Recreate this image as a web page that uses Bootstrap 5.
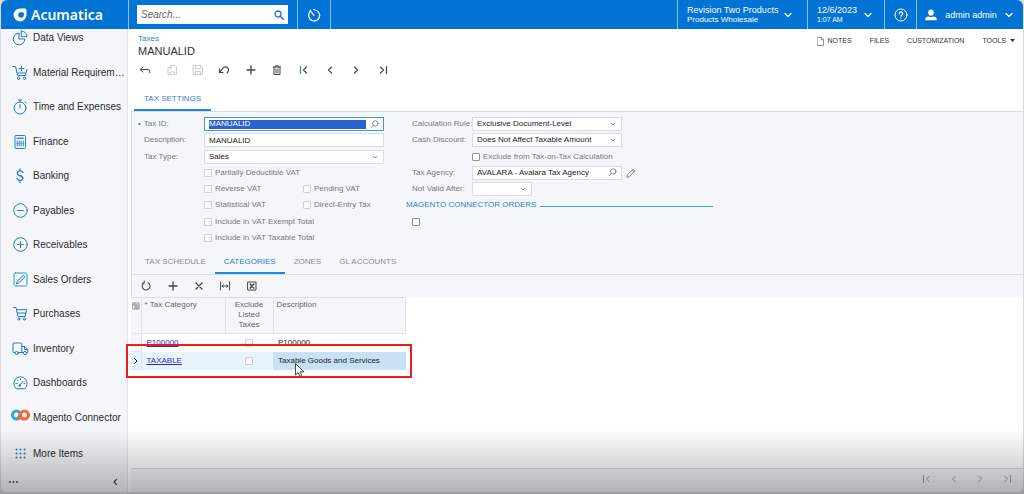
<!DOCTYPE html>
<html lang="en">
<head>
<meta charset="utf-8">
<meta name="viewport" content="width=device-width, initial-scale=1">
<title>Taxes - MANUALID</title>
<link href="https://cdn.jsdelivr.net/npm/bootstrap@5.3.0/dist/css/bootstrap.min.css" rel="stylesheet">
<style>
:root{--brand:#0073d5;--link:#2a84c9;--panel:#f4f6f9;--line:#dadde1}
body{font-family:"Liberation Sans",Arial,sans-serif;font-size:8px;line-height:10px;color:#333;background:#d9dbde}
a{text-decoration:none}
svg{fill:none;stroke:currentColor;stroke-linecap:round;stroke-linejoin:round;flex:none}
.app-window{border-radius:6px;overflow:hidden;margin:0 1px 3px;min-height:calc(100vh - 3px);background:#fff}
.topbar{background:var(--brand);height:29px;color:#fff}
.topbar .cell{border-left:1px solid #8dc0ee;color:#fff}
.topbar button.cell{border-width:0 0 0 1px}
.topbar .tenant{width:130px;padding:0 15px 0 9px}
.topbar .clock{width:77px;padding:0 12px 0 9px}
.topbar .help{width:32px}
.topbar .user{width:107px;padding:0 10px 0 8px}
.side{width:127px;flex:none}
.brand-name{font:600 14px/20px "Noto Sans","Open Sans",sans-serif;color:#fff}
.search-box{width:151px;height:19px;background:#fff;margin:0 9px 0 8px}
.search-box input{font-size:10px;font-style:italic;color:#444;border:0;padding:0 4px;min-width:0;outline:0;background:none}
.search-box input::placeholder{color:#666;opacity:1}
.bare{border:0;background:none;padding:0;color:inherit;line-height:10px}
.t9{font-size:9px}.t7{font-size:7px}
.sidebar{background:var(--panel);border-right:1px solid #e2e5e8}
.side-nav{margin-top:-8px;min-height:451px}
.side-nav a{color:#2c2c2c;font-size:10px;line-height:12px;padding-left:11px;flex:1 1 34px;gap:5px;white-space:nowrap}
.side-nav a:last-child{flex:0 0 37px}
.side-nav svg{color:#2a7cc4}
.side-wrap{clip-path:inset(0)}
.side-foot{height:20px;padding:0 9px 0 7px;color:#444}
.content-area{margin-left:3px;min-width:0}
.page-head{padding:5px 0 0 7px}
.group-link{color:var(--link)}
.page-title{font-size:11px;line-height:14px;color:#333;font-weight:400}
.page-links a,.page-links button{color:#333;font-size:7px}
.page-links{gap:18px;padding:7px 8px 0 0}
.tools{height:24px;color:#444;margin-left:1px}
.tools button{flex:1}
.tools-10{width:264px}.tools-5{width:132px}.tools-4{width:106px}
.tab-row button{font-size:8px;color:#8a8e93;padding:0 9px;border:0;border-bottom:2px solid transparent;border-radius:0;background:none;line-height:20px}
.tab-row button.active{color:var(--link);border-bottom-color:#1a8be0}
.main-tabs{margin:7px 0 0 3px}
.main-tabs button{padding:0 10px}
.sub-tabs{margin:6px 0 0 4px}
.panel-area{background:var(--panel);border-top:1px solid var(--line);border-left:1px solid var(--line)}
.fgrid{display:grid;grid-auto-rows:1fr;min-height:130px;align-items:center;color:#767b81}
.fleft{grid-template-columns:60px 99px 81px;margin-left:12px}
.fright{grid-template-columns:60px 150px 91px;margin-left:28px}
.field{background:#fff;border:1px solid var(--line);height:14px;min-width:0}
.field input,.field select,select.field{font-size:8px;line-height:10px;color:#222;border:0;padding:0 4px;background:none;min-width:0;outline:0;height:12px}
select.field,input.field{border:1px solid var(--line);height:14px;background-color:#fff;color:#222;padding:0 4px;font-size:8px;border-radius:0;line-height:10px;outline:0}
select.field{appearance:none;background-image:url("data:image/svg+xml,%3Csvg xmlns='http://www.w3.org/2000/svg' viewBox='0 0 6 4'%3E%3Cpath d='M1 1l2 2 2-2' fill='none' stroke='%23777' stroke-width='.8'/%3E%3C/svg%3E");background-repeat:no-repeat;background-position:right 5px center;background-size:6px 4px}
.field.current{border-color:#3d97d8}
.field.current input{background:#2a62d0;color:#fff;height:9px;margin-left:4px;padding:0}
.date-field{width:60px}
.tick{appearance:none;width:8px;height:8px;border:1px solid #cdd0d4;border-radius:1px;background:#fafafa;margin:0;flex:none}
.tick.on-edit{border-color:#8f9499;background:#fff}
.tick-row{gap:3px;white-space:nowrap}
.span2{grid-column:span 2}.span3{grid-column:1/-1}
.req{margin-left:-6px}
.req::before{content:"•";margin-right:3px}
.group-title{color:var(--link);gap:4px;margin-left:-6px;font-size:8px;line-height:10px;font-weight:400}
.group-title::after{content:"";flex:1;height:1px;background:#4aa0e0;margin-top:3px}
.list-tools{border-top:1px solid var(--line);background:var(--panel)}
.list-tools .tools{height:22px}
.grid-wrap{width:275px}
.grid-table{table-layout:fixed;width:100%;border-collapse:collapse}
.grid-table th{background:var(--panel);font-weight:400;color:#666;vertical-align:top;padding:2px 3px;height:36px;border-right:1px solid #e2e5e8;border-bottom:1px solid #e2e5e8;border-top:1px solid var(--line)}
.grid-table td{height:18px;padding:0 5px;color:#222;vertical-align:middle}
.grid-table td a{color:#2a2ad4;text-decoration:underline}
.grid-table .sel{background:var(--panel);padding:0;text-align:center;border:1px solid #e2e5e8;border-left:0}
.grid-table tr.picked td{background:#e8f3fc}
.grid-table tr.picked td.focus-cell{background:#c9e1f6}
.grid-table .tick{display:block;margin:0 auto}
.callout{position:absolute;left:-5px;top:47px;width:286px;height:34px;border:2px solid #ee1c1c;pointer-events:none}
.pointer{position:absolute;left:163px;top:66px}
.pager{background:var(--panel);border-top:1px solid var(--line);height:24px}
.pager .tools{color:#9fa3a7;margin-right:3px;height:20px}
.shade{position:fixed;left:0;right:0;bottom:0;height:64px;background:linear-gradient(rgba(0,0,0,0),rgba(0,0,0,.28));pointer-events:none}
</style>
</head>
<body>
<div class="app-window d-flex flex-column">
  <header class="topbar d-flex align-items-stretch">
    <a href="#" class="side d-flex align-items-center ps-2">
      <svg class="ms-1 me-1" width="14" height="14" viewBox="0 0 14 14"><path fill-rule="evenodd" d="M7 .5h5q1.500 0 1.500 1.500V7A6.500 6.500 0 1 1 7 .5zM8 4.200A2.800 2.800 0 1 0 10.800 7V5.200q0-1-1-1z" fill="#fff" stroke="none"/></svg>
      <span class="brand-name">Acumatica</span>
    </a>
    <div class="cell d-flex align-items-center">
      <form class="search-box d-flex align-items-center">
        <input type="text" class="flex-grow-1" placeholder="Search..." aria-label="Search">
        <button type="button" class="bare me-1" aria-label="Run search"><svg class="d-block" width="10" height="10" viewBox="0 0 10 10" style="color:#1b74c5"><circle cx="4" cy="4" r="3" stroke-width="1.300"/><path d="M6.300 6.300L9.200 9.200" stroke-width="1.500"/></svg></button>
      </form>
    </div>
    <div class="cell d-flex"><button class="bare px-2 mx-0" aria-label="Recent"><svg class="d-block" width="16" height="16" viewBox="0 0 16 16"><path d="M9 3A5.500 5.500 0 1 1 3.500 5.500M4.500 4L8 8.500M3.500 5.500L4.500 3M9 3L7.500 2.500" stroke-width="1.200"/></svg></button></div>
    <div class="cell flex-grow-1"></div>
    <button class="bare cell d-flex align-items-center justify-content-between text-start tenant">
      <span><span class="t9 d-block">Revision Two Products</span><span class="d-block">Products Wholesale</span></span>
      <svg width="8" height="6" viewBox="0 0 8 6"><path d="M1 1.500l3 3 3-3" stroke-width="1.300"/></svg>
    </button>
    <button class="bare cell d-flex align-items-center justify-content-between text-start clock">
      <span><span class="t9 d-block">12/6/2023</span><span class="d-block t7">1:07 AM</span></span>
      <svg width="8" height="6" viewBox="0 0 8 6"><path d="M1 1.500l3 3 3-3" stroke-width="1.300"/></svg>
    </button>
    <button class="bare cell d-flex align-items-center justify-content-center help" aria-label="Help">
      <svg width="14" height="14" viewBox="0 0 14 14"><circle cx="7" cy="7" r="6"/><path d="M5.300 5.600a1.700 1.700 0 1 1 2.400 1.500q-.7.400-.7 1.100M7 10v.1" stroke-width="1.200"/></svg>
    </button>
    <button class="bare cell d-flex align-items-center justify-content-between user">
      <svg width="12" height="12" viewBox="0 0 12 12" style="fill:#fff;stroke:none"><ellipse cx="6" cy="3.600" rx="2.800" ry="3.200"/><path d="M.3 11.200V10Q.5 7.800 3.800 7.400q2.200 1 4.400 0 3.300.4 3.500 2.600v1.200z"/></svg>
      <span class="t9">admin admin</span>
      <svg width="8" height="6" viewBox="0 0 8 6"><path d="M1 1.500l3 3 3-3" stroke-width="1.300"/></svg>
    </button>
  </header>

  <div class="d-flex flex-grow-1 side-wrap">
    <aside class="side sidebar d-flex flex-column">
      <nav class="side-nav d-flex flex-column flex-grow-1">
        <a href="#" class="d-flex align-items-center"><svg width="16" height="16" viewBox="0 0 16 16"><path d="M7 3.200A5.800 5.800 0 1 0 12.800 9H7zM9.300 1v5.700H15A5.700 5.700 0 0 0 9.300 1z"/></svg>Data Views</a>
        <a href="#" class="d-flex align-items-center"><svg width="16" height="16" viewBox="0 0 16 16"><path d="M1 1.500h2.500l2.300 9h7.500L15 4.500M5 8h8.500M9.500 1v5M7 3.500h5"/><circle cx="6.500" cy="13.300" r="1.200"/><circle cx="12.500" cy="13.300" r="1.200"/></svg>Material Requirem…</a>
        <a href="#" class="d-flex align-items-center"><svg width="16" height="16" viewBox="0 0 16 16"><circle cx="8" cy="9" r="6"/><path d="M8 9V5.500M6.500 1h3M8 1v2M13 3l1 1"/></svg>Time and Expenses</a>
        <a href="#" class="d-flex align-items-center"><svg width="16" height="16" viewBox="0 0 16 16"><rect x="3" y="1.500" width="10.500" height="13" rx="1"/><path d="M5 4.500h6.500M5.200 7v5M7.200 7v5M9.200 7v5M11.300 7v5" stroke-width=".9"/><path d="M5 3.500h6.500M4.800 9.500h7" stroke-width=".4"/></svg>Finance</a>
        <a href="#" class="d-flex align-items-center"><svg width="16" height="16" viewBox="0 0 16 16"><path d="M11 4.500Q10.300 2.800 8.200 2.800C4.500 2.800 4.400 6.700 7.500 7.500c4.500 1 4.300 5 .5 5q-2.400 0-3-2M8 1v1.800M8 12.500v2" stroke-width="1.300"/></svg>Banking</a>
        <a href="#" class="d-flex align-items-center"><svg width="16" height="16" viewBox="0 0 16 16"><circle cx="8.500" cy="7.500" r="6.800"/><path d="M5.500 7.500h6"/></svg>Payables</a>
        <a href="#" class="d-flex align-items-center"><svg width="16" height="16" viewBox="0 0 16 16"><circle cx="8.500" cy="7.500" r="6.800"/><path d="M5.700 7.500h5.600M8.500 4.700v5.600" stroke-width="1.200"/></svg>Receivables</a>
        <a href="#" class="d-flex align-items-center"><svg width="16" height="16" viewBox="0 0 16 16"><rect x="2" y="1" width="13" height="13" rx="1.500" stroke="#209ae0"/><path d="M4.500 11.500l.8-2.300 6.200-6 1.500 1.500-6.200 6z"/></svg>Sales Orders</a>
        <a href="#" class="d-flex align-items-center"><svg width="16" height="16" viewBox="0 0 16 16"><path d="M1.500 1.500H4l2 9h7.300l1.200-6.800H4.600M5.200 7h8.600"/><circle cx="6.800" cy="13" r="1.100"/><circle cx="12.300" cy="13" r="1.100"/></svg>Purchases</a>
        <a href="#" class="d-flex align-items-center"><svg width="17" height="16" viewBox="0 0 17 16" style="margin-right:-1px"><path d="M3 11.500H1.500q-.5 0-.5-.5V2.800q0-.8.8-.8H9q.8 0 .8.8v8.700H6.500M9.800 5.500h3l3 3.200v2.800H15M11.500 11.500H9.800M12.500 5.500v3h3"/><circle cx="4.700" cy="12" r="1.600"/><circle cx="13" cy="12" r="1.600"/></svg>Inventory</a>
        <a href="#" class="d-flex align-items-center"><svg width="16" height="16" viewBox="0 0 16 16"><path d="M4 13.500a6.700 6.700 0 1 1 9 0zM7.500 10.500L11 6.300"/><circle cx="7.600" cy="10.500" r=".8"/><path d="M4 8.500h1M5.500 5l.6.7M8.500 3.800v.9M12.800 8.500H12"/></svg>Dashboards</a>
        <a href="#" class="d-flex align-items-center"><svg width="19" height="16" viewBox="0 0 19 16" stroke-width="3" style="margin:-5px -2px 0 -1px"><circle cx="5.500" cy="8" r="4" stroke="#28a7e6"/><path d="M9.300 9.500Q10.500 12 13.500 12a4 4 0 1 0-3.500-6L7.300 10.500" stroke="#f26a2e"/></svg>Magento Connector</a>
        <a href="#" class="d-flex align-items-center"><svg width="16" height="16" viewBox="0 0 16 16" stroke-width="2"><path d="M4.500 3.500h.01M8.500 3.500h.01M12.500 3.500h.01M4.500 7.500h.01M8.500 7.500h.01M12.500 7.500h.01M4.500 11.500h.01M8.500 11.500h.01M12.500 11.500h.01"/></svg>More Items</a>
      </nav>
      <div class="side-foot d-flex align-items-center justify-content-between">
        <button class="bare" aria-label="Menu options"><svg class="d-block" width="11" height="4" viewBox="0 0 11 4" stroke-width="1.800"><path d="M2 2h.01M5.500 2h.01M9 2h.01"/></svg></button>
        <button class="bare" aria-label="Collapse menu"><svg class="d-block" width="6" height="8" viewBox="0 0 6 8"><path d="M4.500 1.500L2 4l2.500 2.500" stroke-width="1.200"/></svg></button>
      </div>
    </aside>

    <main class="content-area flex-grow-1 d-flex flex-column">
      <div class="d-flex justify-content-between">
        <div class="page-head">
          <a href="#" class="d-block group-link">Taxes</a>
          <h1 class="page-title mb-0">MANUALID</h1>
        </div>
        <div class="page-links d-flex align-items-start">
          <a href="#" class="d-flex align-items-center"><svg class="me-1" width="7" height="9" viewBox="0 0 7 9" stroke-width=".8" color="#777"><path d="M.5.5h3.800l2.200 2.300v5.700h-6zM4.300.5v2.300h2.200"/></svg>NOTES</a>
          <a href="#">FILES</a>
          <a href="#">CUSTOMIZATION</a>
          <button class="bare d-flex align-items-center">TOOLS<svg class="ms-1" width="5" height="4" viewBox="0 0 5 4" style="fill:#333;stroke:none"><path d="M0 0h5L2.500 3z"/></svg></button>
        </div>
      </div>

      <div class="tools tools-10 d-flex">
        <button class="bare" aria-label="Back"><svg width="12" height="12" viewBox="0 0 12 12"><path d="M4 3L1.200 5.500 4 8M1.500 5.500H9q1.800 0 1.800 2.200v1"/></svg></button>
        <button class="bare" aria-label="Save and close" disabled><svg width="12" height="12" viewBox="0 0 12 12" color="#ccc"><path d="M4 3.500H2v7.200h8.500V3L9.200 1.500H6M4 1L6 3.200 4 5.400M6 3.200H3M4 10.500V8h4.500v2.500"/></svg></button>
        <button class="bare" aria-label="Save" disabled><svg width="12" height="12" viewBox="0 0 12 12" color="#ccc"><path d="M1.500 1.500h7.700l1.300 1.300v7.700h-9zM3.500 1.500v3h5v-3M3.500 10.500V7.500h5v3"/></svg></button>
        <button class="bare" aria-label="Undo"><svg width="12" height="12" viewBox="0 0 12 12"><path d="M1.500 5v3.500H5M1.700 8.300L4.500 4.600Q7 1.700 9.500 3.700q2.200 2.500-.5 5.300" stroke-width="1.100"/></svg></button>
        <button class="bare" aria-label="Add"><svg width="12" height="12" viewBox="0 0 12 12"><path d="M6 2v8M2 6h8" stroke-width="1.300"/></svg></button>
        <button class="bare" aria-label="Delete"><svg width="12" height="12" viewBox="0 0 12 12"><path d="M2.500 3h7M4.500 3V1.800h3V3M3 3v7.500h6V3M5 5v4M7 5v4"/></svg></button>
        <button class="bare" aria-label="First"><svg width="12" height="12" viewBox="0 0 12 12"><path d="M2.500 2.500v7" stroke="#2a84c9" stroke-width="1.200"/><path d="M8.500 3l-3 3 3 3" stroke-width="1.200"/></svg></button>
        <button class="bare" aria-label="Previous"><svg width="12" height="12" viewBox="0 0 12 12"><path d="M7.500 3l-3 3 3 3" stroke-width="1.200"/></svg></button>
        <button class="bare" aria-label="Next"><svg width="12" height="12" viewBox="0 0 12 12"><path d="M4.500 3l3 3-3 3" stroke-width="1.200"/></svg></button>
        <button class="bare" aria-label="Last"><svg width="12" height="12" viewBox="0 0 12 12"><path d="M3.500 3l3 3-3 3M9.500 2.500v7" stroke-width="1.200"/></svg></button>
      </div>

      <div class="tab-row d-flex main-tabs"><button class="active">TAX SETTINGS</button></div>

      <div class="panel-area">
        <form class="d-flex pt-1">
          <div class="fgrid fleft">
            <label for="taxid" class="req">Tax ID:</label>
            <div class="field current span2 d-flex align-items-center"><input id="taxid" type="text" class="flex-grow-1" value="MANUALID"><svg class="mx-1" width="9" height="9" viewBox="0 0 9 9" stroke="#555" stroke-width=".9"><circle cx="5.300" cy="3.500" r="2.700"/><path d="M3.300 5.500L1 7.800"/></svg></div>
            <label for="descr">Description:</label><input id="descr" type="text" class="field span2" value="MANUALID">
            <label for="ttype">Tax Type:</label><select id="ttype" class="field span2"><option>Sales</option></select>
            <span></span><label class="tick-row span2 d-flex align-items-center"><input type="checkbox" class="tick" disabled>Partially Deductible VAT</label>
            <span></span><label class="tick-row d-flex align-items-center"><input type="checkbox" class="tick" disabled>Reverse VAT</label>
            <label class="tick-row d-flex align-items-center"><input type="checkbox" class="tick" disabled>Pending VAT</label>
            <span></span><label class="tick-row d-flex align-items-center"><input type="checkbox" class="tick" disabled>Statistical VAT</label>
            <label class="tick-row d-flex align-items-center"><input type="checkbox" class="tick" disabled>Direct-Entry Tax</label>
            <span></span><label class="tick-row span2 d-flex align-items-center"><input type="checkbox" class="tick" disabled>Include in VAT Exempt Total</label>
            <span></span><label class="tick-row span2 d-flex align-items-center"><input type="checkbox" class="tick" disabled>Include in VAT Taxable Total</label>
          </div>
          <div class="fgrid fright">
            <label for="rule" class="text-nowrap">Calculation Rule:</label><select id="rule" class="field"><option>Exclusive Document-Level</option></select><span></span>
            <label for="disc">Cash Discount:</label><select id="disc" class="field"><option>Does Not Affect Taxable Amount</option></select><span></span>
            <span></span><label class="tick-row span2 d-flex align-items-center"><input type="checkbox" class="tick on-edit">Exclude from Tax-on-Tax Calculation</label>
            <label for="agency">Tax Agency:</label>
            <div class="field d-flex align-items-center"><input id="agency" type="text" class="flex-grow-1" value="AVALARA - Avalara Tax Agency"><svg class="me-1" width="9" height="9" viewBox="0 0 9 9" stroke="#555" stroke-width=".9"><circle cx="5.300" cy="3.500" r="2.700"/><path d="M3.300 5.500L1 7.800"/></svg></div>
            <button type="button" class="bare text-start ps-1" aria-label="Edit agency"><svg class="d-block" width="10" height="10" viewBox="0 0 10 10" stroke-width=".9"><path d="M1 9l.7-2.500L7 1.200l1.800 1.800-5.300 5.300zM6 2.200L7.800 4"/></svg></button>
            <label for="until">Not Valid After:</label><select id="until" class="field date-field"><option></option></select><span></span>
            <h2 class="group-title span3 d-flex align-items-center mb-0">MAGENTO CONNECTOR ORDERS</h2>
            <input type="checkbox" class="tick on-edit" aria-label="Magento connector orders"><span></span><span></span>
            <span></span>
          </div>
        </form>
        <div class="tab-row d-flex sub-tabs">
          <button>TAX SCHEDULE</button><button class="active">CATEGORIES</button><button>ZONES</button><button>GL ACCOUNTS</button>
        </div>
        <div class="list-tools">
          <div class="tools tools-5 d-flex">
            <button class="bare" aria-label="Refresh"><svg width="12" height="12" viewBox="0 0 12 12"><path d="M4.200 2.700A3.900 3.900 0 1 0 8.200 2.800M4.200 1v2.200H2.500" stroke-width="1.100"/></svg></button>
            <button class="bare" aria-label="Add row"><svg width="12" height="12" viewBox="0 0 12 12"><path d="M6 2v8M2 6h8" stroke-width="1.300"/></svg></button>
            <button class="bare" aria-label="Delete row"><svg width="12" height="12" viewBox="0 0 12 12"><path d="M3 3l6 6M9 3L3 9" stroke-width="1.200"/></svg></button>
            <button class="bare" aria-label="Fit columns"><svg width="12" height="12" viewBox="0 0 12 12"><path d="M1.500 2v8M10.500 2v8M3 6h6M4.500 4.800L3 6l1.500 1.200M7.500 4.800L9 6 7.500 7.200" stroke-width=".9"/></svg></button>
            <button class="bare" aria-label="Export"><svg width="12" height="12" viewBox="0 0 12 12"><path d="M2 2h8v8H2z"/><path d="M4.200 4l3.600 4M7.800 4L4.200 8" stroke-width="1.500"/></svg></button>
          </div>
        </div>
      </div>

      <div class="grid-wrap position-relative">
        <table class="grid-table">
          <colgroup><col style="width:10px"><col style="width:84px"><col style="width:48px"><col></colgroup>
          <thead><tr>
            <th class="p-0"><svg class="d-block mt-1 mx-auto" width="8" height="8" viewBox="0 0 8 8" color="#888" stroke-width=".8"><path d="M1 1h6v6H1zM1 3h6M3 1v6M5 3v4M3 5h4"/></svg></th>
            <th><span class="text-danger">*</span> Tax Category</th><th class="text-center">Exclude Listed Taxes</th><th>Description</th>
          </tr></thead>
          <tbody>
            <tr><td class="sel"></td><td><a href="#">P100000</a></td><td><input type="checkbox" class="tick" aria-label="Exclude P100000"></td><td>P100000</td></tr>
            <tr class="picked"><td class="sel"><svg class="d-block mx-auto" width="6" height="8" viewBox="0 0 6 8"><path d="M1.500 1.500L4 4 1.500 6.500"/></svg></td><td><a href="#">TAXABLE</a></td><td><input type="checkbox" class="tick" aria-label="Exclude TAXABLE"></td><td class="focus-cell">Taxable Goods and Services</td></tr>
          </tbody>
        </table>
        <div class="callout"></div>
        <svg class="pointer" width="11" height="15" viewBox="0 0 11 15"><path d="M1.500 1v11l2.700-2.500 1.800 4 1.800-.8L6 8.900h3.700z" fill="#fff" stroke="#333" stroke-width=".9"/></svg>
      </div>

      <div class="pager mt-auto d-flex justify-content-end align-items-start">
        <div class="tools tools-4 d-flex">
          <button class="bare" aria-label="First page"><svg width="12" height="12" viewBox="0 0 12 12"><path d="M2.500 2.500v7M8.500 3l-3 3 3 3"/></svg></button>
          <button class="bare" aria-label="Previous page"><svg width="12" height="12" viewBox="0 0 12 12"><path d="M7.500 3l-3 3 3 3"/></svg></button>
          <button class="bare" aria-label="Next page"><svg width="12" height="12" viewBox="0 0 12 12"><path d="M4.500 3l3 3-3 3"/></svg></button>
          <button class="bare" aria-label="Last page"><svg width="12" height="12" viewBox="0 0 12 12"><path d="M3.500 3l3 3-3 3M9.500 2.500v7"/></svg></button>
        </div>
      </div>
    </main>
  </div>
</div>
<div class="shade"></div>
<script src="https://cdn.jsdelivr.net/npm/bootstrap@5.3.0/dist/js/bootstrap.bundle.min.js"></script>
</body>
</html>
